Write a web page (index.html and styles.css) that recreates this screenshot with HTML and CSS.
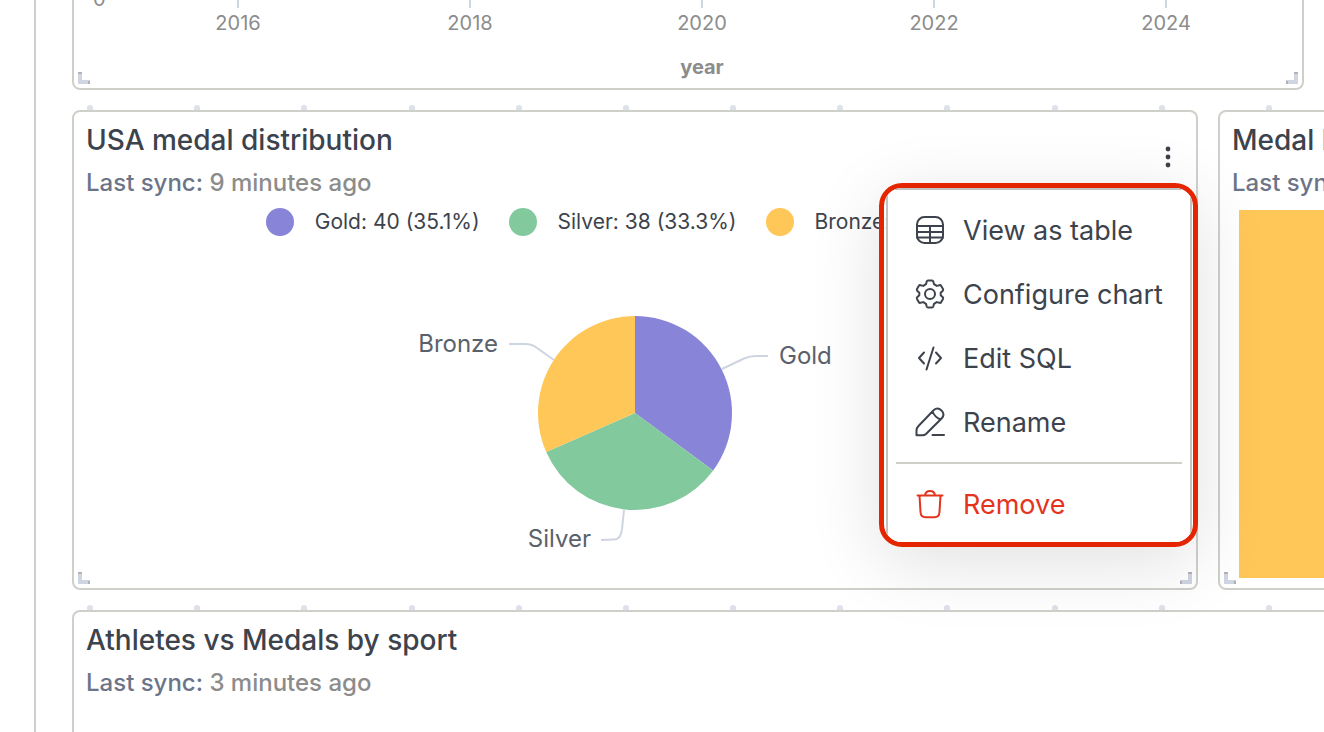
FILE: index.html
```html
<!DOCTYPE html>
<html lang="en">
<head>
<meta charset="utf-8">
<meta name="viewport" content="width=device-width, initial-scale=1">
<title>Medal dashboard</title>
<link rel="stylesheet" href="styles.css">
</head>
<body>
<svg class="symbols" aria-hidden="true">
  <symbol id="handle" viewBox="0 0 12 12">
    <path d="M0 0h4v8h8v4H0z" fill="#cfd6e2"/>
    <path d="M0 0h4v2H0zM10 9h2v3h-2z" fill="#b0b2b4"/>
  </symbol>
</svg>
<main class="dashboard">
  <section class="card card-timeline" aria-label="Medals by year">
    <span class="axis-zero">0</span>
    <div class="axis">
      <span class="tick">2016</span>
      <span class="tick">2018</span>
      <span class="tick">2020</span>
      <span class="tick">2022</span>
      <span class="tick">2024</span>
    </div>
    <p class="axis-title">year</p>
    <svg class="handle handle-left"><use href="#handle"/></svg>
    <svg class="handle handle-right"><use href="#handle"/></svg>
  </section>

  <div class="dots" aria-hidden="true"><i></i><i></i><i></i><i></i><i></i><i></i><i></i><i></i><i></i><i></i><i></i><i></i></div>

  <div class="row">
    <section class="card card-open">
      <header class="card-header">
        <div class="heading">
          <h2>USA medal distribution</h2>
          <p class="sync"><span>Last sync:</span> 9 minutes ago</p>
        </div>
        <button class="more" type="button" aria-label="Chart options" aria-expanded="true">
          <svg width="8" height="24" viewBox="0 0 8 24" fill="#3d434c"><circle cx="4" cy="4" r="2.4"/><circle cx="4" cy="12" r="2.4"/><circle cx="4" cy="20" r="2.4"/></svg>
        </button>
      </header>
      <ul class="legend">
        <li class="gold">Gold: 40 (35.1%)</li>
        <li class="silver">Silver: 38 (33.3%)</li>
        <li class="bronze">Bronze: 36 (31.6%)</li>
      </ul>
      <svg class="pie" viewBox="0 0 460 340" role="img" aria-label="Pie chart of medals">
        <path d="M230 173V76A97 97 0 0 1 308.2 230.4Z" fill="#8884d8"/>
        <path d="M230 173L308.2 230.4A97 97 0 0 1 141.2 212Z" fill="#82ca9d"/>
        <path d="M230 173L141.2 212A97 97 0 0 1 230 76Z" fill="#ffc658"/>
        <g fill="none" stroke="#cfd4e1" stroke-width="2">
          <path d="M104 104H120Q127 104 132 108L149 120"/>
          <path d="M317 129L339 118.500Q345 116 351 116H363"/>
          <path d="M219 270L217 289Q216 299.500 209 299.500L196 300"/>
        </g>
        <text x="93" y="112" text-anchor="end">Bronze</text>
        <text x="374" y="124">Gold</text>
        <text x="186" y="307" text-anchor="end">Silver</text>
      </svg>
      <svg class="handle handle-left"><use href="#handle"/></svg>
      <svg class="handle handle-right"><use href="#handle"/></svg>

      <div class="highlight">
        <div class="menu" role="menu">
          <button type="button" role="menuitem">
            <svg viewBox="0 0 32 32"><rect x="3" y="3" width="26" height="26" rx="7.500"/><path d="M3 12H29M3 18H29M3 23.500H29M16 12V29"/></svg>
            View as table
          </button>
          <button type="button" role="menuitem">
            <svg viewBox="0 0 32 32"><circle cx="16" cy="16" r="5"/><path d="M14 2.500H18Q19 2.500 19.300 3.500L20 6.200L22.700 7.900L25.500 7.200Q26.600 6.900 27.100 7.800L29 11Q29.500 12 28.800 12.700L26.700 14.700V17.300L28.800 19.300Q29.500 20 29 21L27.100 24.200Q26.600 25.100 25.500 24.800L22.700 24.100L20 25.800L19.300 28.500Q19 29.500 18 29.500H14Q13 29.500 12.700 28.500L12 25.800L9.300 24.100L6.500 24.800Q5.400 25.100 4.900 24.200L3 21Q2.500 20 3.200 19.300L5.300 17.300V14.700L3.200 12.700Q2.500 12 3 11L4.900 7.800Q5.400 6.900 6.500 7.200L9.300 7.900L12 6.200L12.700 3.500Q13 2.500 14 2.500Z"/></svg>
            Configure chart
          </button>
          <button type="button" role="menuitem">
            <svg viewBox="0 0 32 32"><path d="M10 10.500L5 16L10 21.500M22 10.500L27 16L22 21.500M19.500 5.500L12.500 27.500"/></svg>
            Edit SQL
          </button>
          <button type="button" role="menuitem">
            <svg viewBox="0 0 32 32"><path d="M2.500 29.300V24.500Q2.500 22 4.500 20L19.600 4.300Q23.500 .800 27.500 4.400Q31.300 8.600 27.800 12.200L12 28Q10.600 29.300 8.500 29.300ZM18.500 5.500Q20.500 10.800 26.400 13.500M18.500 29H30"/></svg>
            Rename
          </button>
          <hr>
          <button class="danger" type="button" role="menuitem">
            <svg viewBox="0 0 32 32"><path d="M3.500 7.500H28.500M11 7.500Q11.500 3 16 3T21 7.500M5.500 7.500L6.500 24Q6.800 29.300 11.500 29.300H20.500Q25.200 29.300 25.500 24L26.500 7.500"/></svg>
            Remove
          </button>
        </div>
      </div>
    </section>

    <section class="card card-bar">
      <header class="card-header">
        <div class="heading">
          <h2>Medal breakdown</h2>
          <p class="sync"><span>Last sync:</span> 9 minutes ago</p>
        </div>
      </header>
      <div class="block"></div>
      <svg class="handle handle-left"><use href="#handle"/></svg>
    </section>
  </div>

  <div class="dots" aria-hidden="true"><i></i><i></i><i></i><i></i><i></i><i></i><i></i><i></i><i></i><i></i><i></i><i></i></div>

  <section class="card card-last">
    <header class="card-header">
      <div class="heading">
        <h2>Athletes vs Medals by sport</h2>
        <p class="sync"><span>Last sync:</span> 3 minutes ago</p>
      </div>
    </header>
  </section>
</main>
</body>
</html>
```
FILE: styles.css
```css
* { box-sizing: border-box; }

body {
  margin: 0;
  background: #fff;
  color: #3d434c;
  font-family: Inter, "Liberation Sans", sans-serif;
}

h2, p, ul { margin: 0; padding: 0; }

.symbols { display: none; }

.dashboard {
  display: flex;
  flex-direction: column;
  height: 100vh;
  margin-left: 34px;
  padding-left: 36px;
  border-left: 2px solid #d0d0cb;
  overflow: hidden;
}

.card {
  position: relative;
  display: flex;
  flex-direction: column;
  border: 2px solid #d0d0cb;
  border-radius: 8px;
  background: #fff;
}

.card-timeline {
  flex: none;
  margin-right: 20px;
  padding: 0 20px 6px 48px;
  border-top: 0;
  border-radius: 0 0 8px 8px;
  color: #8c8c8c;
  font-size: 20px;
}

.axis {
  display: grid;
  grid-template-columns: repeat(5, 1fr);
  justify-items: center;
}

.tick {
  display: flex;
  flex-direction: column;
  align-items: center;
  line-height: 30px;
}

.tick::before {
  content: "";
  width: 2px;
  height: 8px;
  background: #cfd6e2;
}

.axis-zero {
  position: absolute;
  top: -13px;
  left: 19px;
  line-height: 24px;
}

.axis-title {
  padding-top: 14px;
  font-weight: 700;
  line-height: 30px;
  text-align: center;
}

.handle {
  position: absolute;
  bottom: 4px;
  width: 12px;
  height: 12px;
}

.handle-left { left: 4px; }
.handle-right { right: 4px; transform: scaleX(-1); }

.dots {
  display: flex;
  flex: none;
  align-items: flex-end;
  justify-content: space-between;
  height: 20px;
  padding: 0 52px 0 15px;
}

.dots i {
  width: 6px;
  height: 5px;
  border-radius: 3px 3px 0 0;
  background: #dde1e9;
}

.row {
  display: grid;
  flex: none;
  grid-template-columns: minmax(0, 1fr) 400px;
  gap: 20px;
  margin-right: -294px;
}

.card-open { z-index: 1; background: none; }

.card-header {
  display: flex;
  align-items: center;
  justify-content: space-between;
  padding: 8px 12px 0;
}

.heading {
  display: flex;
  flex-direction: column;
  gap: 8px;
}

h2 {
  font-size: 28px;
  font-weight: 500;
  line-height: 40px;
  white-space: nowrap;
}

.sync {
  color: #8c8c8c;
  font-size: 24px;
  font-weight: 500;
  line-height: 30px;
  white-space: nowrap;
}

.sync span { color: #6b7488; }

.more {
  display: flex;
  align-items: center;
  justify-content: center;
  width: 32px;
  height: 32px;
  margin-bottom: 4px;
  padding: 0;
  border: 0;
  background: none;
}

.legend {
  display: flex;
  justify-content: center;
  gap: 29px;
  margin-top: 10px;
  font-size: 21px;
  line-height: 28px;
  list-style: none;
  white-space: nowrap;
}

.legend li { display: flex; gap: 21px; }

.legend li::before {
  content: "";
  width: 28px;
  height: 28px;
  border-radius: 50%;
}

.gold::before { background: #8884d8; }
.silver::before { background: #82ca9d; }
.bronze::before { background: #ffc658; }

.pie {
  align-self: center;
  width: 460px;
  max-width: 100%;
  margin: 4px 0 8px;
}

.pie text { fill: #5b616b; font-size: 24px; }

.highlight {
  position: absolute;
  top: 71px;
  right: -2px;
  padding: 0 1px 0 2px;
  border: 5px solid #e42500;
  border-radius: 23px;
  box-shadow: 0 16px 72px rgba(0, 0, 0, .12);
  overflow: hidden;
}

.menu {
  display: flex;
  flex-direction: column;
  width: 306px;
  padding: 8px 8px 6px;
  border: 2px solid #c0c3c0;
  border-bottom: 0;
  border-radius: 8px 8px 0 0;
  background: #fff;
}

.menu button {
  display: flex;
  align-items: center;
  gap: 17px;
  height: 64px;
  padding: 0 18px;
  border: 0;
  background: none;
  color: #3d434c;
  font: inherit;
  font-size: 27px;
  text-align: left;
  white-space: nowrap;
}

.menu svg {
  flex: none;
  width: 32px;
  height: 32px;
  fill: none;
  stroke: currentColor;
  stroke-width: 2;
  stroke-linecap: round;
  stroke-linejoin: round;
}

.menu .danger { color: #e5341d; }

.menu hr {
  width: 100%;
  height: 2px;
  margin: 8px 0;
  border: 0;
  background: #d0d0cb;
}

.block {
  flex: 1;
  margin: 12px 19px 10px;
  background: #ffc658;
}

.card-last {
  flex: 1 0 160px;
  margin-right: -20px;
  border-bottom: 0;
  border-radius: 8px 0 0;
}
```
